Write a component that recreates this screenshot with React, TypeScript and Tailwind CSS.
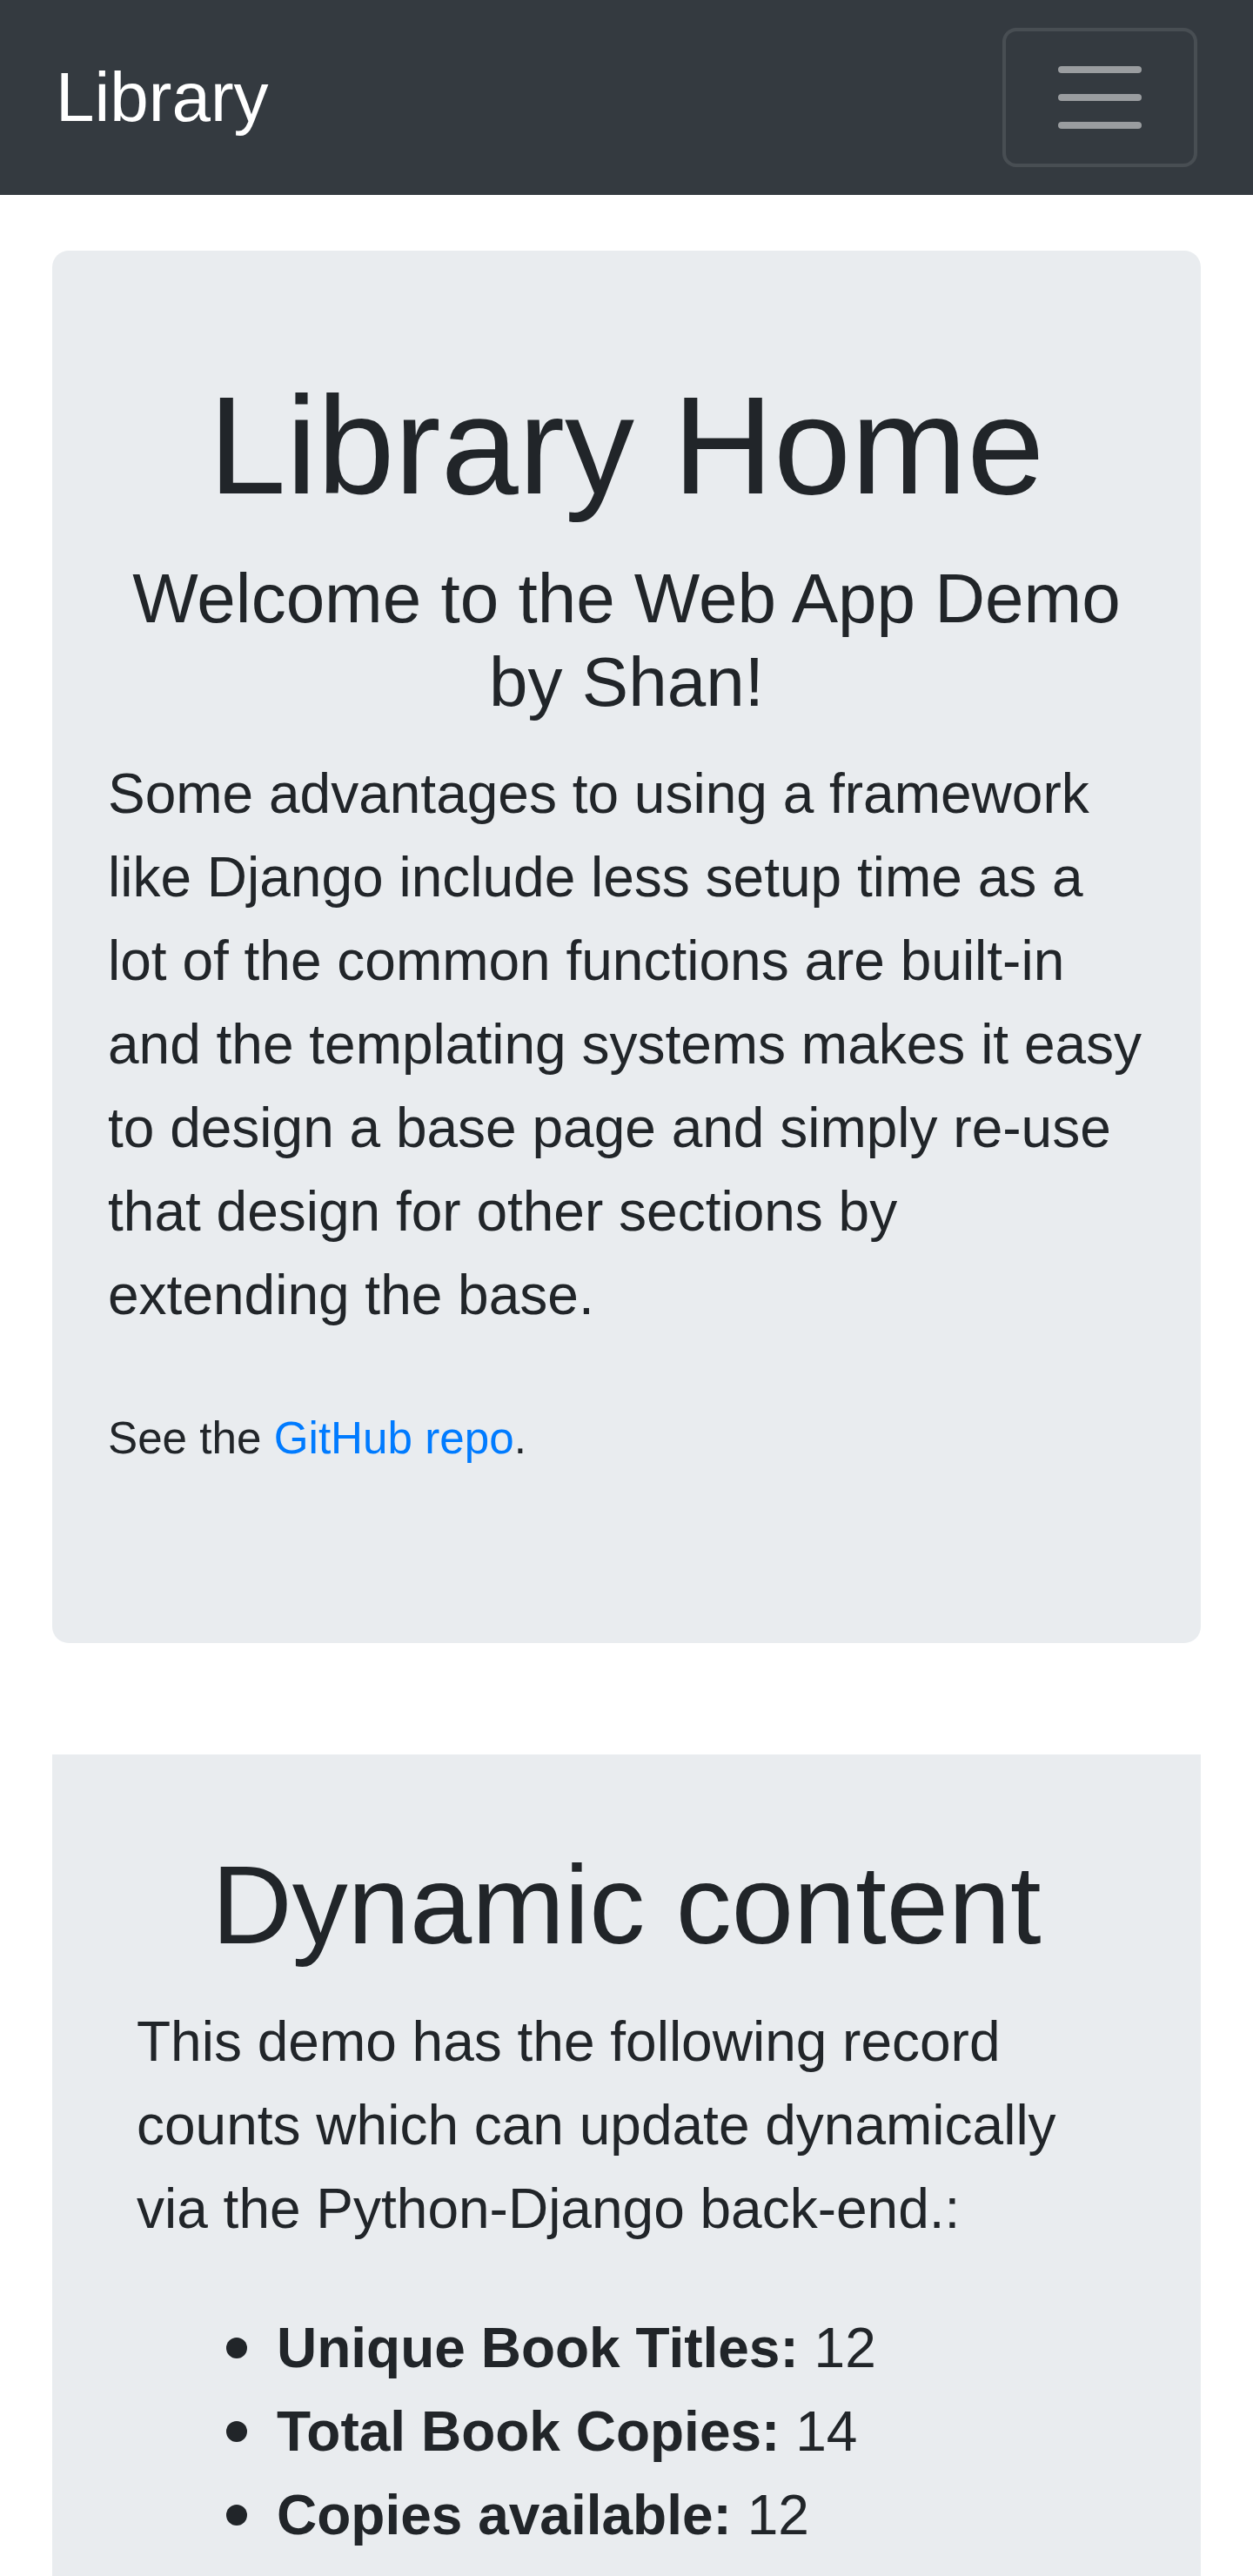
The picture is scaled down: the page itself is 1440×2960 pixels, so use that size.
import React from "react";

function Navbar() {
  return (
    <nav className="flex h-[224px] items-center justify-between bg-[#343a40] px-16 py-8">
      <a href="#" className="py-5 text-[80px] leading-[120px] text-white">
        Library
      </a>
      <button className="flex h-[160px] w-[224px] items-center justify-center rounded-2xl border-4 border-white/10 px-12 py-4">
        <svg width="120" height="120" viewBox="0 0 30 30">
          <path
            d="M4 7h22M4 15h22M4 23h22"
            stroke="rgba(255,255,255,0.5)"
            strokeWidth="2"
            strokeLinecap="round"
            strokeMiterlimit="10"
          />
        </svg>
      </button>
    </nav>
  );
}

const counts = [
  { label: "Unique Book Titles:", value: 12 },
  { label: "Total Book Copies:", value: 14 },
  { label: "Copies available:", value: 12 },
];

export default function App() {
  return (
    <div className="h-[2960px] overflow-hidden bg-white font-['Liberation_Sans',Arial,sans-serif] text-[#212529]">
      <Navbar />
      <main className="px-[60px] pt-16">
        <section className="mb-32 rounded-[19px] bg-[#e9ecef] px-16 py-32">
          <h1 className="mb-8 text-center text-[160px] leading-[1.2] font-normal">Library Home</h1>
          <h5 className="mb-8 text-center text-[80px] leading-[1.2] font-normal">
            Welcome to the Web App Demo by Shan!
          </h5>
          <p className="mb-16 text-[64px] leading-[1.5]">
            Some advantages to using a framework like Django include less setup time as a lot of the common
            functions are built-in and the templating systems makes it easy to design a base page and simply
            re-use that design for other sections by extending the base.
          </p>
          <p className="mb-16 text-[64px] leading-[1.5]">
            <small className="text-[51.2px]">
              See the{" "}
              <a href="#" className="text-[#007bff]">
                GitHub repo
              </a>
              .
            </small>
          </p>
        </section>

        <section className="bg-[#e9ecef] px-[97px] pt-24 pb-32">
          <h2 className="mb-8 text-center text-[128px] leading-[1.2] font-normal">Dynamic content</h2>
          <p className="mb-16 text-[64px] leading-[1.5]">
            This demo has the following record counts which can update dynamically via the Python-Django
            back-end.:
          </p>
          <ul className="mb-16 pl-[103px] text-[64px] leading-[1.5]">
            {counts.map((c) => (
              <li key={c.label} className="flex items-center">
                <span className="mr-[34px] h-6 w-6 shrink-0 rounded-full bg-[#212529]" />
                <span>
                  <strong className="font-bold">{c.label}</strong> {c.value}
                </span>
              </li>
            ))}
          </ul>
        </section>
      </main>
    </div>
  );
}
